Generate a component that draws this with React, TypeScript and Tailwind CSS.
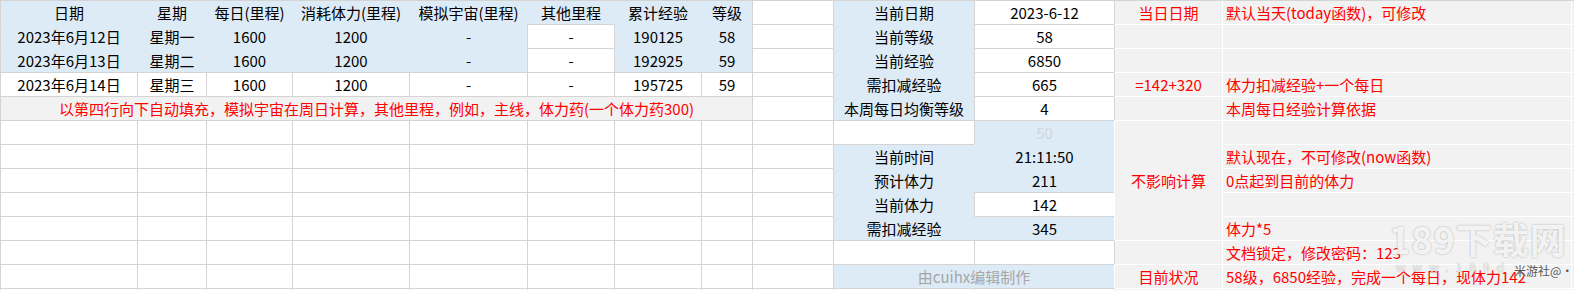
import React from "react";

type Kind = "b" | "w" | "g";
type Tone = "black" | "red" | "faint" | "muted";
type Cell = { k: Kind; t?: string; tone?: Tone; span?: number; rowSpan?: number; left?: boolean };

const b = (t?: string, tone: Tone = "black", span = 1): Cell => ({ k: "b", t, tone, span });
const w = (t?: string, tone: Tone = "black"): Cell => ({ k: "w", t, tone });
const g = (t?: string, tone: Tone = "red", left = false, span = 1, rowSpan = 1): Cell => ({ k: "g", t, tone, left, span, rowSpan });
const ws = (n: number): Cell[] => Array.from({ length: n }, () => w());

const ROWS: Cell[][] = [
  [b("日期"), b("星期"), b("每日(里程)"), b("消耗体力(里程)"), b("模拟宇宙(里程)"), b("其他里程"), b("累计经验"), b("等级"), w(), b("当前日期"), w("2023-6-12"), g("当日日期"), g("默认当天(today函数)，可修改", "red", true), g()],
  [b("2023年6月12日"), b("星期一"), b("1600"), b("1200"), b("-"), w("-"), b("190125"), b("58"), w(), b("当前等级"), w("58"), g(), g(), g()],
  [b("2023年6月13日"), b("星期二"), b("1600"), b("1200"), b("-"), w("-"), b("192925"), b("59"), w(), b("当前经验"), w("6850"), g(), g(), g()],
  [w("2023年6月14日"), w("星期三"), w("1600"), w("1200"), w("-"), w("-"), w("195725"), w("59"), w(), b("需扣减经验"), w("665"), g("=142+320"), g("体力扣减经验+一个每日", "red", true), g()],
  [g("以第四行向下自动填充，模拟宇宙在周日计算，其他里程，例如，主线，体力药(一个体力药300)", "red", false, 8), w(), b("本周每日均衡等级"), w("4"), g(), g("本周每日经验计算依据", "red", true), g()],
  [...ws(9), w(), b("50", "faint"), g("不影响计算", "red", false, 1, 5), g(), g()],
  [...ws(9), b("当前时间"), b("21:11:50"), g("默认现在，不可修改(now函数)", "red", true), g()],
  [...ws(9), b("预计体力"), b("211"), g("0点起到目前的体力", "red", true), g()],
  [...ws(9), b("当前体力"), w("142"), g(), g()],
  [...ws(9), b("需扣减经验"), b("345"), g("体力*5", "red", true), g()],
  [...ws(9), w(), w(), g(), g("文档锁定，修改密码：123", "red", true), g()],
  [...ws(9), b("由cuihx编辑制作", "muted", 2), g("目前状况"), g("58级，6850经验，完成一个每日，现体力142", "red", true), g()],
  [...ws(11), g(), g(), g()],
];

const NCOL = 14;

type Placed = Cell & { r: number; c: number };
const kinds: Kind[][] = ROWS.map(() => Array<Kind>(NCOL).fill("w"));
const occupied: boolean[][] = ROWS.map(() => Array<boolean>(NCOL).fill(false));
const placed: Placed[] = [];
ROWS.forEach((row, r) => {
  let c = 0;
  row.forEach((cell) => {
    while (c < NCOL && occupied[r][c]) c++;
    const span = cell.span ?? 1;
    const rs = cell.rowSpan ?? 1;
    for (let i = 0; i < rs; i++)
      for (let j = 0; j < span; j++) {
        if (r + i < ROWS.length) {
          occupied[r + i][c + j] = true;
          kinds[r + i][c + j] = cell.k;
        }
      }
    placed.push({ ...cell, r, c });
    c += span;
  });
});

const LEFT = { line: "border-l-[#d4d4d4]", blue: "border-l-[#ddebf7]", white: "border-l-white" };
const TOP = { line: "border-t-[#d4d4d4]", blue: "border-t-[#ddebf7]", white: "border-t-white" };
const BG = { b: "bg-[#ddebf7]", w: "bg-white", g: "bg-[#f2f2f2]" };
const TONE = { black: "text-black", red: "text-[#ff0000]", faint: "text-[#cfd6dd]", muted: "text-[#a6a6a6]" };
const SPAN: Record<number, string> = { 1: "", 2: "col-span-2", 8: "col-span-8" };
const RSPAN: Record<number, string> = { 1: "", 5: "row-span-5" };

function line(a: Kind, n: Kind | undefined): "line" | "blue" | "white" {
  const nb = n ?? "w";
  if (a === "w" || nb === "w") return "line";
  if (a === "b" && nb === "b") return "blue";
  return "white";
}

export default function App() {
  return (
    <div
      className="relative w-[1574px] h-[290px] overflow-hidden bg-white"
      style={{ fontFamily: '"Noto Sans CJK SC", "Noto Sans", sans-serif' }}
    >
      <div className="grid grid-cols-[137px_69px_86px_117px_118px_87px_87px_51px_81px_141px_140px_108px_349px_3px] auto-rows-[24px] text-[15px] leading-none">
        {placed.map((cell, i) => {
          const lc = line(cell.k, cell.c > 0 ? kinds[cell.r][cell.c - 1] : undefined);
          const tc = line(cell.k, cell.r > 0 ? kinds[cell.r - 1][cell.c] : undefined);
          return (
            <div
              key={i}
              className={`flex items-center whitespace-nowrap border-l border-t ${LEFT[lc]} ${TOP[tc]} ${BG[cell.k]} ${TONE[cell.tone ?? "black"]} ${SPAN[cell.span ?? 1]} ${RSPAN[cell.rowSpan ?? 1]} ${cell.left ? "justify-start pl-[3px]" : "justify-center"}`}
            >
              {cell.t}
            </div>
          );
        })}
      </div>

      {/* watermark */}
      <div className="pointer-events-none absolute left-[1389px] top-[220px] whitespace-nowrap text-[36px] font-semibold leading-none tracking-[1px] text-white/85 [text-shadow:0_0_2px_rgba(110,110,110,0.6)]">
        189下载网
      </div>
      <div className="pointer-events-none absolute left-[1396px] top-[261px] whitespace-nowrap text-[12px] leading-none tracking-[7px] text-white/80 [text-shadow:0_0_1px_rgba(110,110,110,0.7)]">
        www.189d
      </div>
      <div className="pointer-events-none absolute left-[1514px] top-[265px] whitespace-nowrap text-[12px] leading-none text-[#555] [text-shadow:0_0_2px_#fff]">
        米游社@·
      </div>
    </div>
  );
}
